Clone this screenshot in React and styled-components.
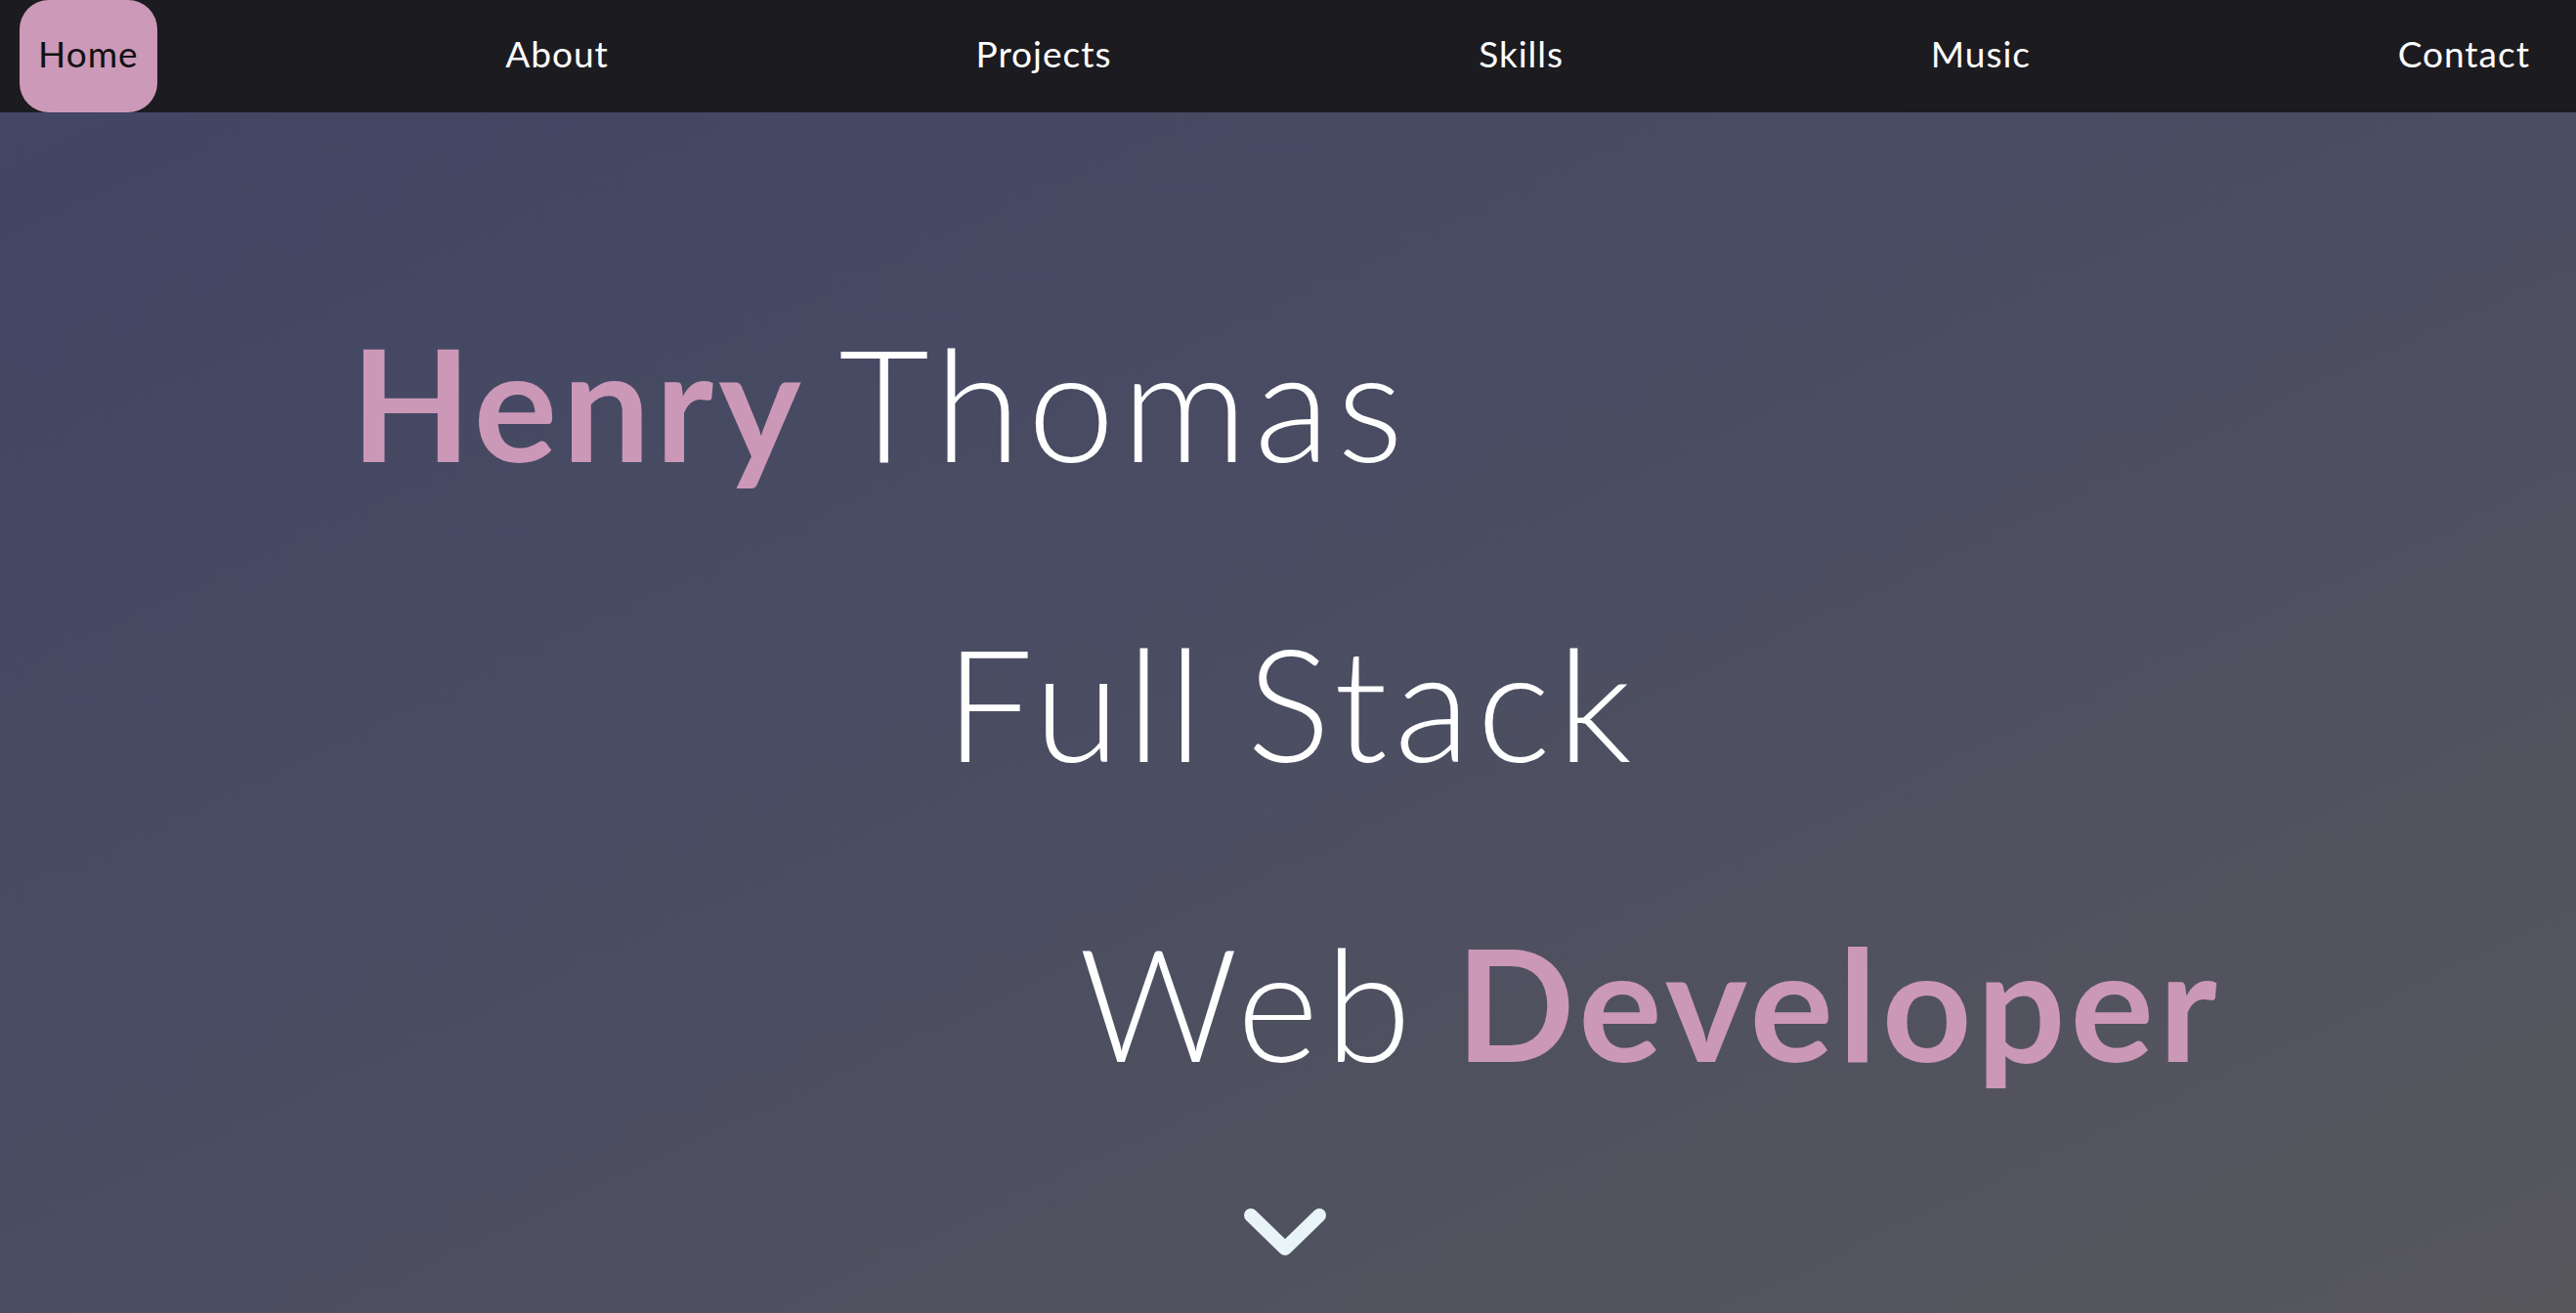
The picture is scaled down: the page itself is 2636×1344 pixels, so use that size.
import styled, { createGlobalStyle } from "styled-components";

const GlobalStyle = createGlobalStyle`
  html, body {
    margin: 0;
    padding: 0;
  }
  body {
    font-family: "Lato", "Open Sans", sans-serif;
    background: #1c1b20;
    overflow: hidden;
  }
`;

const links = ["Home", "About", "Projects", "Skills", "Music", "Contact"];

export default function App() {
  return (
    <>
      <GlobalStyle />
      <Nav>
        {links.map((l, i) => (
          <NavLink key={l} $active={i === 0}>
            {l}
          </NavLink>
        ))}
      </Nav>
      <Hero>
        <Line $indent={359}>
          <Accent>Henry</Accent> Thomas
        </Line>
        <Line $indent={967}>Full Stack</Line>
        <Line $indent={1104}>
          Web <Accent>Developer</Accent>
        </Line>
        <ArrowRow>
          <svg width="84" height="48" viewBox="0 0 84 48">
            <polyline
              points="7,7 42,41 77,7"
              fill="none"
              stroke="#e8f4f8"
              strokeWidth="14"
              strokeLinecap="round"
              strokeLinejoin="round"
            />
          </svg>
        </ArrowRow>
      </Hero>
    </>
  );
}

const Nav = styled.nav`
  height: 115px;
  background: #1c1b20;
  display: flex;
  justify-content: space-between;
  align-items: stretch;
  padding: 0 28px 0 20px;
`;

const NavLink = styled.a`
  display: flex;
  align-items: center;
  padding: 0 19px 6px;
  font-size: 37px;
  font-weight: 400;
  letter-spacing: 1px;
  color: ${(p) => (p.$active ? "#111" : "#fff")};
  background: ${(p) => (p.$active ? "#cc99b9" : "transparent")};
  border-radius: 30px;
  cursor: pointer;
`;

const Hero = styled.section`
  height: 1229px;
  box-sizing: border-box;
  padding-top: 143px;
  display: flex;
  flex-direction: column;
  background: linear-gradient(
    to bottom right,
    #424563 0%,
    #4a4d62 45%,
    #57575c 100%
  );
`;

const Line = styled.h1`
  margin: 0;
  padding-left: ${(p) => p.$indent}px;
  font-size: 160px;
  line-height: 307px;
  font-weight: 300;
  letter-spacing: 7px;
  word-spacing: -12px;
  color: #fff;
  white-space: nowrap;
`;

const Accent = styled.span`
  color: #cb98b7;
  font-weight: 700;
  letter-spacing: 5px;
`;

const ArrowRow = styled.div`
  display: flex;
  justify-content: center;
  margin-top: 58px;
  padding-right: 6px;
`;
